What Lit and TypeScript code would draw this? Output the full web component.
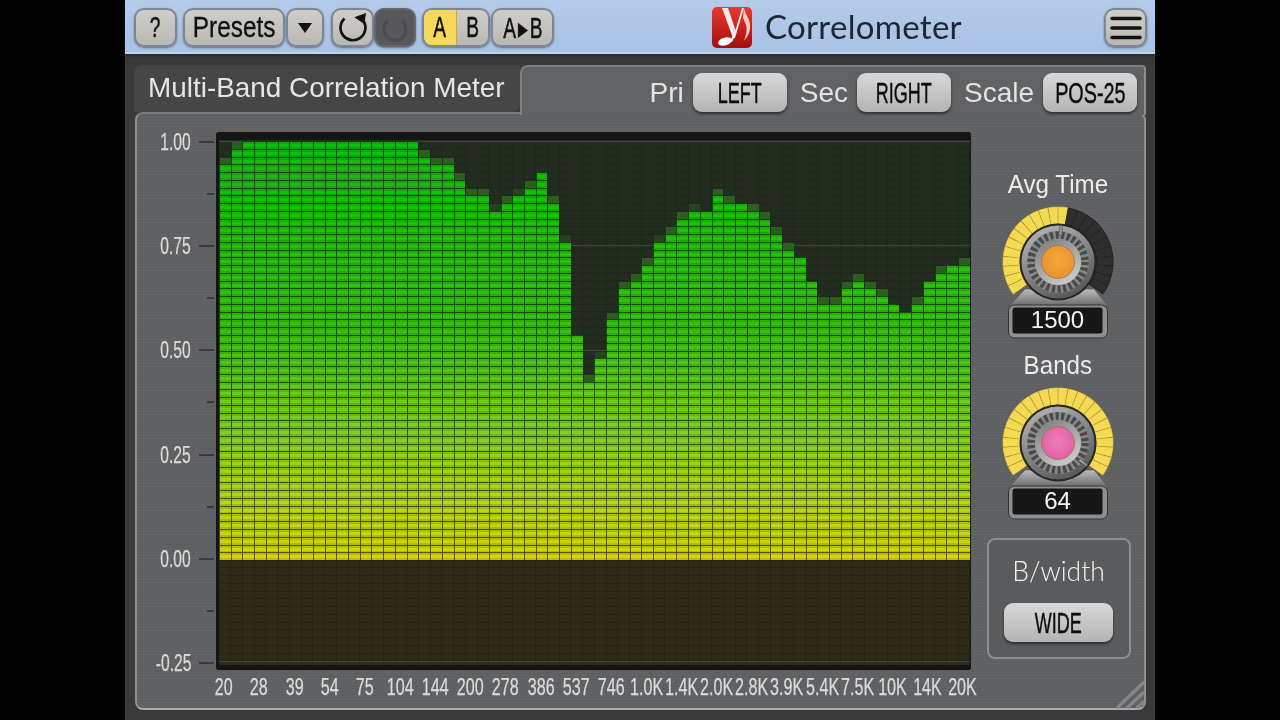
import { LitElement, html, css, svg } from "lit";
import { customElement, property } from "lit/decorators.js";

const TOPS = [3,1,0,0,0,0,0,0,0,0,0,0,0,0,0,0,0,2,3,3,5,7,7,9,8,7,6,4,8,13,25,31,28,23,19,18,16,13,12,10,9,9,7,8,8,9,10,12,14,15,18,21,21,19,18,19,20,21,22,21,18,17,16,16];
// strength of the half-lit cell just above each column's top (0 none, 1 faint, 2 strong)
const DIM = [2,2,0,0,0,0,0,0,0,0,0,1,1,1,1,0,0,2,2,2,2,2,2,1,2,1,2,0,2,1,0,2,1,2,2,2,2,1,2,2,1,0,2,2,0,2,2,2,2,0,0,2,2,2,2,2,2,0,0,2,0,2,0,2];
const ROWS = 54, CW = 11.73, RH = 7.76, X0 = 3, Y0 = 9;
const STOPS: [number, number[]][] = [
  [0, [14, 180, 8]], [0.45, [50, 186, 12]], [0.65, [108, 198, 20]], [0.85, [166, 204, 22]], [1, [202, 200, 12]],
];
function colorAt(t: number) {
  for (let i = 1; i < STOPS.length; i++) {
    if (t <= STOPS[i][0]) {
      const [a, ca] = STOPS[i - 1], [b, cb] = STOPS[i];
      const k = (t - a) / (b - a);
      return ca.map((v, j) => v + (cb[j] - v) * k);
    }
  }
  return STOPS[STOPS.length - 1][1];
}
const rgb = (c: number[], m = 1) => `rgb(${c.map((v) => Math.round(Math.min(255, v * m))).join(",")})`;
const box = (x: number, y: number, w: number, h: number) => `M${x} ${y}h${w}v${h}h${-w}z`;

function meterCells() {
  const out: unknown[] = [];
  for (let r = 0; r < ROWS; r++) {
    const y0 = Math.round(Y0 + r * RH), y1 = Math.round(Y0 + (r + 1) * RH);
    let base = "", main = "", glow = "", strong = "", faint = "";
    for (let c = 0; c < 64; c++) {
      const x0 = Math.round(X0 + c * CW), x1 = Math.round(X0 + (c + 1) * CW);
      const w = x1 - x0, h = y1 - y0;
      if (r >= TOPS[c]) {
        base += box(x0, y0, w, h);
        main += box(x0 + 1, y0 + 1, w - 1, h - 1);
        glow += box(x0 + 1, y0 + 3, w - 1, 3);
      } else if (r === TOPS[c] - 1 && DIM[c] === 2) strong += box(x0 + 1, y0 + 1, w - 1, h - 1);
      else if (r === TOPS[c] - 1 && DIM[c] === 1) faint += box(x0 + 1, y0 + 1, w - 1, h - 1);
    }
    const col = colorAt(r / (ROWS - 1));
    out.push(svg`<path d=${strong} fill="#2c5e1f"/><path d=${faint} fill="#26421f"/><path d=${base} fill=${rgb(col, 0.4)}/><path d=${main} fill=${rgb(col, 0.93)}/><path d=${glow} fill=${rgb(col, 1.05)}/>`);
  }
  return out;
}
function gridLines(x1: number, x2: number, y1: number, y2: number, stroke: string) {
  let d = "";
  for (let c = 0; c <= 64; c++) d += `M${(X0 + c * CW).toFixed(1)} ${y1}V${y2}`;
  for (let y = y1; y <= y2; y += RH) d += `M${x1} ${y.toFixed(1)}H${x2}`;
  return svg`<path d=${d} stroke=${stroke} stroke-width="1" fill="none"/>`;
}

@customElement("knob-control")
class KnobControl extends LitElement {
  @property() label = "";
  @property() value = "";
  @property() cap = "#e8902a";
  @property() capHi = "#f4a83e";
  @property({ type: Number }) lit = 24;
  @property({ type: Number }) pointer = 0;
  static styles = css`
    :host { display: flex; flex-direction: column; align-items: center; }
    .label { font: 26px/30px "Liberation Sans", Arial, sans-serif; color: #ececec; margin-bottom: 3px; transform: scaleX(.93); white-space: nowrap; }
    svg { display: block; }
    .val { font: 24px "Liberation Sans", Arial, sans-serif; fill: #f4f4f4; text-anchor: middle; }
  `;
  render() {
    const n = 24, span = 252, start = -126, id = this.label.replace(/\W/g, "");
    const segs = [];
    const P = (r: number, d: number) => { const a = (d * Math.PI) / 180; return `${(60 + r * Math.sin(a)).toFixed(2)} ${(60 - r * Math.cos(a)).toFixed(2)}`; };
    const wedge = (a0: number, a1: number, r0: number, r1: number) => `M${P(r0, a0)}A${r0} ${r0} 0 0 1 ${P(r0, a1)}L${P(r1, a1)}A${r1} ${r1} 0 0 0 ${P(r1, a0)}Z`;
    for (let i = 0; i < n; i++) {
      const a0 = start + (span * i) / n, a1 = start + (span * (i + 1)) / n, on = i < this.lit;
      segs.push(svg`<path d=${wedge(a0, a1, 38, 55.5)} fill=${on ? "#bda233" : "#191919"}/><path d=${wedge(a0 + 0.5, a1 - 0.5, 38.6, 55)} fill=${on ? "#f4d952" : "#2e2e2e"}/>`);
    }
    return html`
      <div class="label">${this.label}</div>
      <svg width="120" height="140" viewBox="0 0 120 140">
        <defs>
          <linearGradient id="s${id}" x1="0.2" y1="0" x2="0.7" y2="1"><stop offset="0" stop-color="#b4b4b4"/><stop offset="1" stop-color="#565656"/></linearGradient>
          <linearGradient id="b${id}" x1="0" y1="0" x2="0" y2="1"><stop offset="0" stop-color="#bcbcbc"/><stop offset="1" stop-color="#666"/></linearGradient>
          <linearGradient id="i${id}" x1="0.2" y1="0" x2="0.8" y2="1"><stop offset="0" stop-color="#808080"/><stop offset="1" stop-color="#d0d0d0"/></linearGradient>
          <radialGradient id="c${id}" cx="0.5" cy="0.45" r="0.6"><stop offset="0" stop-color=${this.capHi}/><stop offset="1" stop-color=${this.cap}/></radialGradient>
        </defs>
        ${segs}
        <path d="M10 105L27 87H96L111 105Z" fill="url(#b${id})" stroke="#4a4a4a" stroke-width=".6"/>
        <circle cx="60" cy="60" r="38.5" fill="#262626"/>
        <circle cx="60" cy="60" r="36.5" fill="url(#s${id})"/>
        <circle cx="60" cy="60" r="31" fill="#8a8a8a"/>
        <circle cx="60" cy="60" r="27" fill="none" stroke="#4a4a4a" stroke-width="7.5" stroke-dasharray="3.2 2.45"/>
        <circle cx="60" cy="60" r="23" fill="url(#i${id})"/>
        <circle cx="60" cy="60" r="16.5" fill="url(#c${id})" stroke="#8a6a50" stroke-width=".6"/>
        <g transform="rotate(${this.pointer} 60 60)"><path d="M58.2 33L59 23h2l.8 10z" fill="#9a9a9a" stroke="#444" stroke-width=".6"/></g>
        <rect x="10.5" y="103" width="99" height="33" rx="6" fill="#8e8e8e" stroke="#333"/>
        <rect x="14.5" y="105.5" width="90" height="26" rx="2.5" fill="#161616"/>
        <text class="val" x="59.5" y="126">${this.value}</text>
      </svg>`;
  }
}

@customElement("app-root")
class AppRoot extends LitElement {
  static styles = css`
    :host { display: flex; justify-content: center; height: 720px; background: #000; overflow: hidden; }
    .app { width: 1030px; height: 720px; display: flex; flex-direction: column; background: #3a3a3b; filter: blur(.35px); }
    .head { height: 54px; flex: none; box-sizing: border-box; display: flex; align-items: flex-start; padding: 8px 8px 0 9px;
      background: linear-gradient(#b4cbea, #a9c1e3); border-bottom: 2px solid #c2d3ec; box-shadow: 0 2px 2px #2a2a2a; position: relative; }
    .hbtn { height: 39px; box-sizing: border-box; border: 2px solid #7d8794; border-radius: 10px; background: linear-gradient(#cfcec9, #b9b8b3);
      display: flex; align-items: center; justify-content: center; color: #111; flex: none; box-shadow: 0 1px 2px rgba(50,60,80,.6); }
    .c { display: inline-block; font-family: "Liberation Sans Narrow", "Liberation Sans", Arial, sans-serif; white-space: nowrap; }
    .hbtn .c { font-size: 29px; transform: scaleX(.84); -webkit-text-stroke: .3px #111; }
    .hbtn .na { transform: scaleX(.66); -webkit-text-stroke: .5px #111; }
    .hbtn .nb { transform: scaleX(.66); letter-spacing: 3px; -webkit-text-stroke: .5px #111; padding-left: 3px; }
    .q { width: 43px; margin-right: 6px; }
    .presets { width: 102px; margin-right: 1px; }
    .drop { width: 38px; margin-right: 7px; }
    .undo { width: 43px; margin-right: 0; }
    .power { width: 42px; margin-right: 6px; background: #58585a; border-color: #63676e; }
    .ab { width: 68px; margin-right: 1px; padding: 0; overflow: hidden; align-items: stretch; justify-content: flex-start; }
    .cell { flex: 1; display: flex; align-items: center; justify-content: center; }
    .cell.on { flex: none; width: 32px; background: #f6d85c; border-right: 1px solid #c8ac3c; }
    .atob { width: 63px; }
    .brand { display: flex; align-items: center; margin-left: 158px; height: 41px; margin-top: -1px; }
    .brand span { font: 33px/37px "Lato", "Liberation Sans", sans-serif; color: #1d2733; margin-left: 13px; letter-spacing: .3px; margin-top: -2px; }
    .menu { width: 43px; margin-left: auto; }
    .body { flex: 1; display: flex; flex-direction: column; padding: 11px 9px 10px 9px; min-height: 0; }
    .top { height: 47px; flex: none; display: flex; }
    .tab { width: 386px; flex: none; box-sizing: border-box; background: #464647; border-radius: 8px 0 8px 0; color: #e6e6e6;
      font: 27.9px/46px "Liberation Sans", Arial, sans-serif; padding-left: 14px; white-space: nowrap; }
    .ctl { flex: 1; display: flex; justify-content: flex-end; align-items: flex-start; padding: 6px 7px 0 0; box-sizing: border-box; height: 50px; position: relative; z-index: 1;
      background: #616263; border-top: 2px solid #7f8081; border-left: 2px solid #7f8081; border-right: 2px solid #8c8d8e; border-radius: 8px 4px 0 0; }
    .ctl .lbl { font: 28px/39px "Liberation Sans", Arial, sans-serif; color: #e4e4e4; margin: 0 9px 0 13px; }
    .pbtn { height: 39px; box-sizing: border-box; border-radius: 9px; background: linear-gradient(#d8d8d8, #b4b4b4);
      display: flex; align-items: center; justify-content: center; color: #0c0c0c; box-shadow: 0 2px 3px rgba(0,0,0,.55); flex: none; width: 94px; }
    .pbtn .c { font-size: 30px; transform: scaleX(.6); -webkit-text-stroke: .45px #0c0c0c; }
    .pbtn .mid6 { transform: scaleX(.66); }
    .panel { flex: 1; min-height: 0; box-sizing: border-box; display: flex; position: relative; border: 2px solid #8f9091; border-top-color: #7c7d7e; border-bottom-color: #a9aaab;
      border-radius: 8px; margin-left: 1px;
      background: repeating-linear-gradient(0deg, #606162 0 1px, #5e5f60 1px 2px, #626364 2px 3px); }
    .yaxis { width: 79px; flex: none; box-sizing: border-box; padding-top: 27px; display: flex; flex-direction: column; }
    .yrow { height: 52.1px; position: relative; flex: none; display: flex; align-items: flex-start; justify-content: flex-end; }
    .tick { height: 2px; width: 15px; background: #3b3b3b; margin-right: 2px; }
    .tick.minor { width: 7px; }
    .ylab { position: absolute; right: 25px; top: -13px; font-size: 23px; line-height: 28px; color: #dcdcdc; transform: scaleX(.68); transform-origin: right center; -webkit-text-stroke: .25px #dcdcdc; }
    .mid { width: 755px; flex: none; padding-top: 18px; position: relative; }
    .plot { display: block; }
    .xaxis { display: grid; grid-template-columns: repeat(22, 35.2px); margin-left: -9.6px; margin-top: 2px; height: 30px; }
    .xaxis .c { text-align: center; font-size: 23px; line-height: 30px; color: #dcdcdc; transform: scaleX(.7); justify-self: center; -webkit-text-stroke: .25px #dcdcdc; }
    .right { flex: 1; display: flex; flex-direction: column; align-items: center; padding-top: 55px; }
    .right knob-control + knob-control { margin-top: 8px; }
    .bw { margin-top: 15px; width: 144px; height: 121px; box-sizing: border-box; border: 2px solid #8c8d8e; border-radius: 8px;
      background: #5a5b5c; display: flex; flex-direction: column; align-items: center; padding-top: 15px; margin-left: 2px; }
    .bw .t { font: 300 26.5px/32px "Lato", "Liberation Sans", sans-serif; color: #f4f4f4; margin-bottom: 16px; }
    .bw .pbtn { width: 109px; }
    .grip { position: absolute; right: -1px; bottom: -1px; }
  `;
  render() {
    const ys: [string, boolean][] = [["1.00", true], ["", false], ["0.75", true], ["", false], ["0.50", true], ["", false], ["0.25", true], ["", false], ["0.00", true], ["", false], ["-0.25", true]];
    const xs = "20 28 39 54 75 104 144 200 278 386 537 746 1.0K 1.4K 2.0K 2.8K 3.9K 5.4K 7.5K 10K 14K 20K".split(" ");
    return html`
      <div class="app">
        <div class="head">
          <div class="hbtn q"><span class="c na">?</span></div>
          <div class="hbtn presets"><span class="c">Presets</span></div>
          <div class="hbtn drop"><svg width="18" height="12" viewBox="0 0 18 12"><path d="M2 1h14L9 11z" fill="#111"/></svg></div>
          <div class="hbtn undo"><svg width="34" height="34" viewBox="0 0 34 34"><path d="M27.5 10A12.5 12.5 0 1 1 8.5 7.5" fill="none" stroke="#111" stroke-width="2.6"/><path d="M30 2L18.3 6.3L28.3 13Z" fill="#111"/></svg></div>
          <div class="hbtn power"><svg width="30" height="30" viewBox="0 0 30 30"><path d="M22 8a11 11 0 1 1-14 0" fill="none" stroke="#4c4c4e" stroke-width="3"/></svg></div>
          <div class="hbtn ab"><div class="cell on"><span class="c na">A</span></div><div class="cell"><span class="c na">B</span></div></div>
          <div class="hbtn atob"><span class="c nb">A▸B</span></div>
          <div class="brand">
            <svg width="40" height="41" viewBox="0 0 40 41">
              <defs><linearGradient id="lg" x1="0" y1="0" x2="0" y2="1"><stop offset="0" stop-color="#e8392f"/><stop offset="1" stop-color="#a30f10"/></linearGradient></defs>
              <rect width="40" height="41" rx="5" fill="url(#lg)"/>
              <path d="M10 1H16L23.5 23L30 1H32L23 31H21Z" fill="#f7e9e6"/>
              <ellipse cx="13" cy="34.5" rx="7" ry="4" fill="#fff" transform="rotate(-16 13 34.5)"/>
              <path d="M18 34L21 28L23 29L20 35Z" fill="#fff"/>
              <path d="M32 1C33 8 39 12 38 21C37.5 27 35 30 32 34C34 28 35.5 23 34 18C33 15 32 13 31 11Z" fill="#f3c9c4"/>
            </svg>
            <span>Correlometer</span>
          </div>
          <div class="hbtn menu"><svg width="32" height="28" viewBox="0 0 32 28"><path d="M2 4.5h28M2 14h28M2 23.5h28" stroke="#111" stroke-width="3.6" stroke-linecap="round"/></svg></div>
        </div>
        <div class="body">
          <div class="top">
            <div class="tab">Multi-Band Correlation Meter</div>
            <div class="ctl">
              <span class="lbl">Pri</span><div class="pbtn"><span class="c">LEFT</span></div>
              <span class="lbl">Sec</span><div class="pbtn"><span class="c">RIGHT</span></div>
              <span class="lbl">Scale</span><div class="pbtn"><span class="c mid6">POS-25</span></div>
            </div>
          </div>
          <div class="panel">
            <div class="yaxis">
              ${ys.map(([l, major]) => html`<div class="yrow"><div class="tick ${major ? "" : "minor"}"></div>${l ? html`<span class="c ylab">${l}</span>` : ""}</div>`)}
            </div>
            <div class="mid">
              <svg class="plot" width="755" height="538" viewBox="0 0 755 538" shape-rendering="crispEdges">
                <rect width="755" height="538" rx="3" fill="#151515"/>
                <rect x="3" y="8" width="751" height="420" fill="#222d1f"/>
                <rect x="3" y="428" width="751" height="105" fill="#2e2c18"/>
                ${gridLines(3, 754, 9, 428, "#1d271b")}
                ${gridLines(3, 754, 428, 533, "#262411")}
                <path d="M3 9.5H754M3 113.5H754M3 218.5H754M3 529.5H754" stroke="#3d473a" stroke-width="1"/>
                ${meterCells()}
              </svg>
              <div class="xaxis">${xs.map((x) => html`<span class="c">${x}</span>`)}</div>
            </div>
            <div class="right">
              <knob-control label="Avg Time" value="1500" lit="13" pointer="5"></knob-control>
              <knob-control label="Bands" value="64" lit="24" pointer="128" cap="#e060a0" capHi="#ee7cb8"></knob-control>
              <div class="bw"><div class="t">B/width</div><div class="pbtn"><span class="c">WIDE</span></div></div>
            </div>
            <svg class="grip" width="34" height="30" viewBox="0 0 34 30"><path d="M6 29L33 3M16 29L33 13M26 29L33 22" stroke="#85868a" stroke-width="3.4"/></svg>
          </div>
        </div>
      </div>`;
  }
}
